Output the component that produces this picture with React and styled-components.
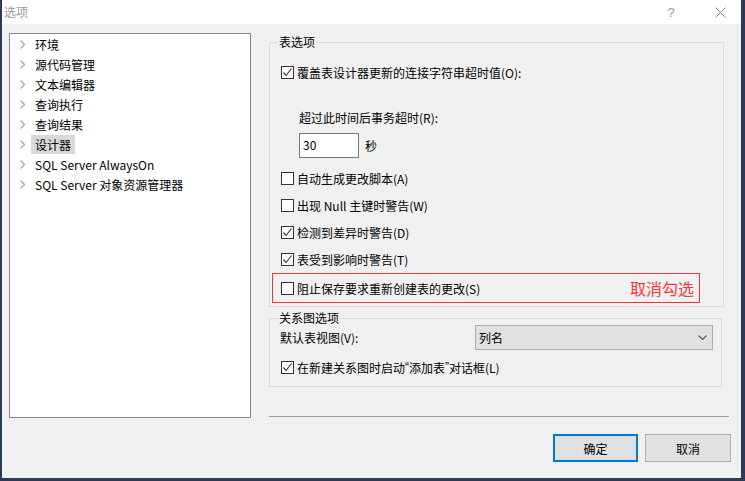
import React from "react";
import styled, { createGlobalStyle } from "styled-components";

const Global = createGlobalStyle`
  html, body { margin: 0; padding: 0; background: #2b3a55; }
  body { font-family: "Noto Sans CJK SC", "Microsoft YaHei", sans-serif; font-size: 12px; color: #000; }
  * { box-sizing: border-box; }
`;

const Window = styled.div`
  width: 745px;
  height: 481px;
  background: #f0f0f0;
  border-left: 2px solid #2b3a55;
  border-right: 4px solid #2b3a55;
  border-bottom: 3px solid #2b3a55;
  display: flex;
  flex-direction: column;
  overflow: hidden;
`;

const TitleBar = styled.div`
  height: 24px;
  background: #fff;
  display: flex;
  align-items: center;
  padding-left: 2px;
  flex: none;
`;

const Title = styled.div`
  color: #999;
  font-size: 12px;
  line-height: 22px;
  flex: 1;
`;

const TitleButton = styled.div`
  width: 12px;
  height: 22px;
  display: flex;
  align-items: center;
  justify-content: center;
  color: #999;
  font-family: "Liberation Sans", sans-serif;
  font-size: 13px;
  margin-right: ${(p) => p.$mr}px;
`;

const Body = styled.div`
  flex: 1;
  display: flex;
  flex-direction: column;
  padding: 9px 10px 0 7px;
`;

const Main = styled.div`
  display: flex;
  gap: 18px;
  height: 385px;
`;

const Tree = styled.div`
  width: 242px;
  flex: none;
  background: #fff;
  border: 1px solid #828790;
`;

const TreeRow = styled.div`
  height: 20px;
  display: flex;
  align-items: center;
  padding-left: 10px;
`;

const Chevron = styled.svg`
  width: 5px;
  height: 9px;
  margin-right: 6px;
  flex: none;
`;

const TreeLabel = styled.span`
  line-height: 19px;
  padding: 0 4px;
  background: ${(p) => (p.$selected ? "#d9d9d9" : "transparent")};
`;

const RightCol = styled.div`
  width: 460px;
  display: flex;
  flex-direction: column;
`;

const GroupBox = styled.div`
  position: relative;
  border: 1px solid #dcdcdc;
  margin-top: ${(p) => p.$mt}px;
  width: ${(p) => p.$w}px;
  padding: ${(p) => p.$pad};
  display: flex;
  flex-direction: column;
`;

const Legend = styled.span`
  position: absolute;
  top: -10px;
  left: 8px;
  padding: 0 1px;
  line-height: 18px;
  background: #f0f0f0;
`;

const CheckRow = styled.label`
  display: flex;
  align-items: center;
  height: 20px;
  padding-left: ${(p) => p.$pl ?? 11}px;
  margin-top: ${(p) => p.$mt ?? 0}px;
  white-space: nowrap;
`;

const Quote = styled.span`
  font-family: "Liberation Sans", sans-serif;
`;

const Box = styled.span`
  width: 13px;
  height: 13px;
  border: 1px solid #333;
  background: #fff;
  margin-right: 3px;
  display: flex;
  align-items: center;
  justify-content: center;
  flex: none;
`;

const Highlight = styled.div`
  margin-top: 4px;
  margin-left: 2px;
  width: 428px;
  height: 30px;
  border: 1px solid #e8363b;
  display: flex;
  align-items: center;
  justify-content: space-between;
  padding-right: 5px;
`;

const Note = styled.span`
  color: #f23a3a;
  font-size: 16px;
  line-height: 20px;
`;

const SubLabel = styled.div`
  line-height: 20px;
  padding-left: 29px;
  margin-top: 26px;
`;

const InputRow = styled.div`
  display: flex;
  align-items: center;
  padding-left: 29px;
  margin-top: 5px;
  gap: 6px;
`;

const Input = styled.div`
  width: 60px;
  height: 25px;
  border: 1px solid #7a7a7a;
  background: #fff;
  padding-left: 3px;
  line-height: 22px;
  font-size: 12px;
`;

const SelectRow = styled.div`
  display: flex;
  align-items: center;
  justify-content: space-between;
  padding-left: 10px;
  padding-right: 8px;
`;

const Select = styled.div`
  width: 238px;
  height: 25px;
  border: 1px solid #adadad;
  background: #e1e1e1;
  display: flex;
  align-items: center;
  justify-content: space-between;
  padding: 0 5px 0 3px;
`;

const Separator = styled.div`
  margin-top: auto;
  margin-bottom: 1px;
  width: 460px;
  height: 1px;
  background: #a0a0a0;
`;

const Footer = styled.div`
  display: flex;
  justify-content: flex-end;
  gap: 7px;
  margin-top: 16px;
`;

const Button = styled.button`
  width: ${(p) => p.$w}px;
  height: 28px;
  background: #e1e1e1;
  border: ${(p) => (p.$primary ? "2px solid #0078d7" : "1px solid #adadad")};
  font-family: inherit;
  font-size: 12px;
  color: #000;
  padding: 0;
`;

const Check = ({ checked }) => (
  <Box>
    {checked && (
      <svg width="11" height="11" viewBox="0 0 11 11">
        <polyline points="1.5,5.5 4,8.5 9.5,1.5" fill="none" stroke="#444" strokeWidth="1.2" />
      </svg>
    )}
  </Box>
);

const treeItems = [
  "环境",
  "源代码管理",
  "文本编辑器",
  "查询执行",
  "查询结果",
  "设计器",
  "SQL Server AlwaysOn",
  "SQL Server 对象资源管理器",
];

export default function App() {
  return (
    <>
      <Global />
      <Window>
        <TitleBar>
          <Title>选项</Title>
          <TitleButton $mr={37}>?</TitleButton>
          <TitleButton $mr={15}>
            <svg width="11" height="11" viewBox="0 0 11 11">
              <path d="M0.5 0.5 L10.5 10.5 M10.5 0.5 L0.5 10.5" stroke="#888" strokeWidth="1" />
            </svg>
          </TitleButton>
        </TitleBar>
        <Body>
          <Main>
            <Tree>
              {treeItems.map((t) => (
                <TreeRow key={t}>
                  <Chevron viewBox="0 0 5 9">
                    <polyline points="0.5,0.5 4.5,4.5 0.5,8.5" fill="none" stroke="#a6a6a6" strokeWidth="1.3" />
                  </Chevron>
                  <TreeLabel $selected={t === "设计器"}>{t}</TreeLabel>
                </TreeRow>
              ))}
            </Tree>
            <RightCol>
              <GroupBox $mt={9} $w={455} $pad="19px 0 3px 0">
                <Legend>表选项</Legend>
                <CheckRow>
                  <Check checked />
                  覆盖表设计器更新的连接字符串超时值(O):
                </CheckRow>
                <SubLabel>超过此时间后事务超时(R):</SubLabel>
                <InputRow>
                  <Input>30</Input>
                  <span>秒</span>
                </InputRow>
                <CheckRow $mt={10}>
                  <Check />
                  自动生成更改脚本(A)
                </CheckRow>
                <CheckRow $mt={7}>
                  <Check />
                  出现 Null 主键时警告(W)
                </CheckRow>
                <CheckRow $mt={7}>
                  <Check checked />
                  检测到差异时警告(D)
                </CheckRow>
                <CheckRow $mt={7}>
                  <Check checked />
                  表受到影响时警告(T)
                </CheckRow>
                <Highlight>
                  <CheckRow $pl={8}>
                    <Check />
                    阻止保存要求重新创建表的更改(S)
                  </CheckRow>
                  <Note>取消勾选</Note>
                </Highlight>
              </GroupBox>
              <GroupBox $mt={11} $w={453} $pad="6px 0 9px 0">
                <Legend>关系图选项</Legend>
                <SelectRow>
                  <span>默认表视图(V):</span>
                  <Select>
                    <span>列名</span>
                    <svg width="9" height="5" viewBox="0 0 9 5">
                      <polyline points="0.5,0.5 4.5,4.5 8.5,0.5" fill="none" stroke="#555" strokeWidth="1.1" />
                    </svg>
                  </Select>
                </SelectRow>
                <CheckRow $mt={7}>
                  <Check checked />
                  在新建关系图时启动<Quote>“</Quote>添加表<Quote>”</Quote>对话框(L)
                </CheckRow>
              </GroupBox>
              <Separator />
            </RightCol>
          </Main>
          <Footer>
            <Button $primary $w={85}>确定</Button>
            <Button $w={86}>取消</Button>
          </Footer>
        </Body>
      </Window>
    </>
  );
}
